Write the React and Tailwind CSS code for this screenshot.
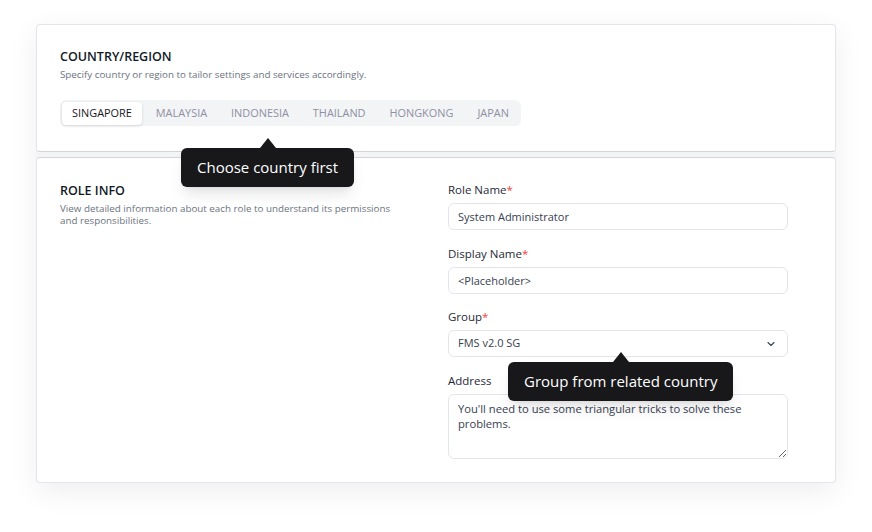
import { ChevronDown } from "lucide-react";

const countries = ["Singapore", "Malaysia", "Indonesia", "Thailand", "Hongkong", "Japan"];

const Tooltip = ({ text, className }) => (
    <div className={`absolute flex flex-col items-center ${className}`}>
        <div className="w-0 h-0 border-x-[8px] border-x-transparent border-b-[10px] border-b-[#18181b]"></div>
        <div className="px-4 h-[39px] flex items-center rounded-md bg-[#18181b] text-white text-[15px] whitespace-nowrap shadow-lg">
            {text}
        </div>
    </div>
);

const Field = ({ label, required, children }) => (
    <div className="flex flex-col">
        <label className="text-[11.5px] leading-[14px] font-medium text-[#1f2937] mb-[6px]">
            {label}
            {required && <span className="text-[#ef4444]">*</span>}
        </label>
        {children}
    </div>
);

const App = () => {
    return (
        <div
            className="min-h-screen bg-white pt-[24px] px-[36px]"
            style={{ fontFamily: '"Open Sans", "Liberation Sans", sans-serif' }}
        >
            <div className="relative flex flex-col gap-[5px] bg-[#f3f4f6] rounded-md shadow-[0_8px_30px_rgba(0,0,0,0.07)]">
                {/* Country / region */}
                <div className="bg-white border border-[#e4e4ec] border-b-[#d4d4d8] rounded-[4px] pl-[23px] pr-6 pt-[24px] pb-[25px]">
                    <h2 className="text-[12.5px] leading-4 font-semibold text-[#111827]">COUNTRY/REGION</h2>
                    <p className="mt-[3px] text-[9.8px] leading-[14px] text-[#6b7280]">
                        Specify country or region to tailor settings and services accordingly.
                    </p>
                    <div className="mt-[18px] inline-flex items-center gap-1 p-[2px] h-[26px] rounded-md bg-[#f3f4f6]">
                        {countries.map((c, i) => (
                            <button
                                key={c}
                                type="button"
                                className={
                                    i === 0
                                        ? "h-[23px] px-2.5 rounded-[4px] bg-white shadow-[0_1px_3px_rgba(0,0,0,0.15)] text-[10.9px] font-medium uppercase text-[#18181b]"
                                        : "h-[23px] px-2.5 rounded-[4px] text-[10.9px] font-medium uppercase text-[#8e90a3]"
                                }
                            >
                                {c}
                            </button>
                        ))}
                    </div>
                </div>

                {/* Role info */}
                <div className="flex bg-white border border-[#e4e4ec] border-t-[#d4d4d8] rounded-[4px] pl-[23px] pr-[47px] pt-[25px] pb-[23px]">
                    <div className="flex-1 pr-6">
                        <h2 className="text-[12.5px] leading-4 font-semibold text-[#111827]">ROLE INFO</h2>
                        <p className="mt-1 max-w-[336px] text-[9.8px] leading-[12px] text-[#6b7280]">
                            View detailed information about each role to understand its permissions and responsibilities.
                        </p>
                    </div>
                    <div className="w-[340px] flex flex-col gap-[16.5px]">
                        <Field label="Role Name" required>
                            <input
                                type="text"
                                defaultValue="System Administrator"
                                className="h-[27px] px-[9px] rounded-md border border-[#e4e4ec] text-[11px] text-[#374151] outline-none"
                            />
                        </Field>
                        <Field label="Display Name" required>
                            <input
                                type="text"
                                defaultValue="<Placeholder>"
                                className="h-[27px] px-[9px] rounded-md border border-[#e4e4ec] text-[11px] text-[#374151] outline-none"
                            />
                        </Field>
                        <Field label="Group" required>
                            <div className="h-[27px] px-[9px] flex items-center justify-between rounded-md border border-[#e4e4ec] text-[11px] text-[#374151]">
                                <span>FMS v2.0 SG</span>
                                <ChevronDown className="w-3 h-3 mr-[1px] text-[#374151]" strokeWidth={2.2} />
                            </div>
                        </Field>
                        <Field label="Address">
                            <textarea
                                defaultValue="You'll need to use some triangular tricks to solve these problems."
                                className="h-[65px] px-[9px] py-[6px] rounded-md border border-[#e4e4ec] text-[11.2px] leading-[15px] text-[#374151] outline-none"
                            />
                        </Field>
                    </div>
                </div>

                <Tooltip text="Choose country first" className="left-[145px] top-[114px]" />
                <Tooltip text="Group from related country" className="left-[472px] top-[328px]" />
            </div>
        </div>
    );
};

export default App;
